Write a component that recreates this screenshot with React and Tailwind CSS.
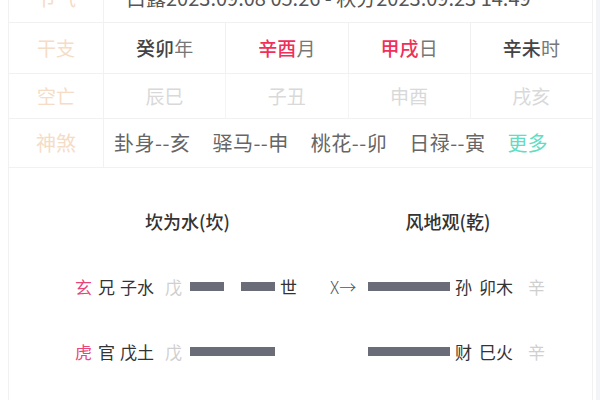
import React from 'react';

const font = { fontFamily: '"Noto Sans CJK SC", "Noto Sans", sans-serif' };

const ganzhi = [
  { stem: '癸卯', unit: '年', red: false },
  { stem: '辛酉', unit: '月', red: true },
  { stem: '甲戌', unit: '日', red: true },
  { stem: '辛未', unit: '时', red: false },
];

const kongwang = ['辰巳', '子丑', '申酉', '戌亥'];
const shensha = ['卦身--亥', '驿马--申', '桃花--卯', '日禄--寅'];

const Label = ({ children }) => (
  <div className="w-[95px] shrink-0 flex items-center justify-center border-r border-[#f1f1f1] text-[#f5dcc6]">
    {children}
  </div>
);

const Yao = ({ yin }) =>
  yin ? (
    <div className="w-[85px] flex justify-between">
      <span className="w-[34px] h-[9px] bg-[#6a6c77]" />
      <span className="w-[34px] h-[9px] bg-[#6a6c77]" />
    </div>
  ) : (
    <span className="w-[85px] h-[9px] bg-[#6a6c77]" />
  );

const HexRow = ({ god, rel, branch, stem, yin, shi, move, right }) => (
  <div className="flex items-center h-[65px] text-[17px] text-[#333] pl-[66px]">
    <span className="w-[18px] text-[#e8457a]">{god}</span>
    <span className="w-[18px] ml-[5px]">{rel}</span>
    <span className="w-[36px] ml-[4px]">{branch}</span>
    <span className="w-[17px] ml-[9px] text-[#cfcfcf]">{stem}</span>
    <div className="ml-[8px] flex items-center">
      <Yao yin={yin} />
    </div>
    <span className="w-[17px] ml-[5px]">{shi}</span>
    <span className="w-[33px] ml-[33px] text-[#555] font-light">{move}</span>
    <span className="w-[82px] h-[9px] ml-[5px] bg-[#6a6c77]" />
    <span className="w-[18px] ml-[5px]">{right.rel}</span>
    <span className="w-[36px] ml-[6px]">{right.branch}</span>
    <span className="w-[17px] ml-[13px] text-[#cfcfcf]">{right.stem}</span>
  </div>
);

export default function App() {
  return (
    <div className="w-[600px] h-[400px] overflow-hidden bg-white relative" style={font}>
      <div className="ml-[8px] w-[585px] h-[440px] -mt-[26px] border-x border-[#f1f1f1]">
        {/* 节气 */}
        <div className="flex h-[49px] text-[20px] border-b border-[#f1f1f1]">
          <Label>节气</Label>
          <div className="flex-1 flex items-center pl-[22px] text-[#555]">
            白露2023.09.08 05:26 - 秋分2023.09.23 14:49
          </div>
        </div>

        {/* 干支 */}
        <div className="flex h-[51px] text-[19px] border-b border-[#f1f1f1]">
          <Label>干支</Label>
          {ganzhi.map((g, i) => (
            <div
              key={g.unit}
              className={`flex-1 flex items-center justify-center ${i < 3 ? 'border-r border-[#f1f1f1]' : ''}`}
            >
              <span className={`font-medium ${g.red ? 'text-[#f0305a]' : 'text-[#444]'}`}>{g.stem}</span>
              <span className="text-[#777]">{g.unit}</span>
            </div>
          ))}
        </div>

        {/* 空亡 */}
        <div className="flex h-[45px] text-[19px] border-b border-[#f1f1f1]">
          <Label>空亡</Label>
          {kongwang.map((k, i) => (
            <div
              key={k}
              className={`flex-1 flex items-center justify-center text-[#d9d9d9] ${i < 3 ? 'border-r border-[#f4f4f4]' : ''}`}
            >
              {k}
            </div>
          ))}
        </div>

        {/* 神煞 */}
        <div className="flex h-[49px] text-[20px] border-b border-[#f1f1f1]">
          <Label>神煞</Label>
          <div className="flex-1 flex items-center pl-[10px] gap-[22px] text-[#666]">
            {shensha.map((s) => (
              <span key={s} className="tracking-[0.5px]">{s}</span>
            ))}
            <span className="text-[#62dcc3]">更多</span>
          </div>
        </div>

        {/* 卦 */}
        <div className="flex pt-[40px] text-[18px] font-medium text-[#333]">
          <div className="w-[357px] text-center">坎为水(坎)</div>
          <div className="w-[164px] text-center">风地观(乾)</div>
        </div>
        <div className="mt-[19px]">
          <HexRow
            god="玄" rel="兄" branch="子水" stem="戊" yin shi="世" move="X→"
            right={{ rel: '孙', branch: '卯木', stem: '辛' }}
          />
          <HexRow
            god="虎" rel="官" branch="戊土" stem="戊" yin={false} shi="" move=""
            right={{ rel: '财', branch: '巳火', stem: '辛' }}
          />
        </div>
      </div>
      <div className="absolute right-0 top-0 w-[4px] h-full bg-[#f3f4f7]" />
    </div>
  );
}
